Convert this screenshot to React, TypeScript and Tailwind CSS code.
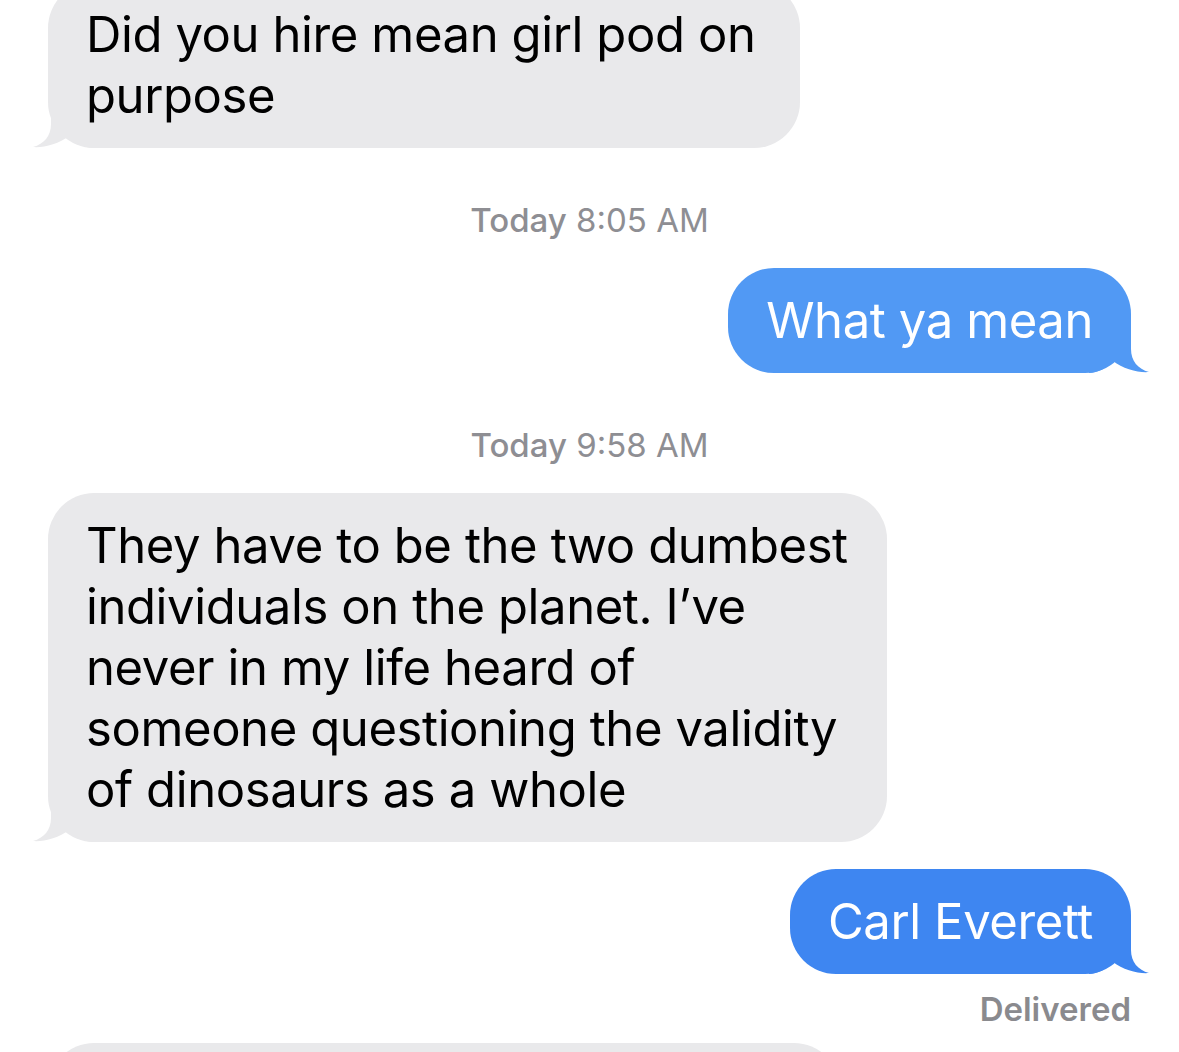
import React from "react";

const FONT = { fontFamily: '"Inter", "Liberation Sans", sans-serif' };

function TailRight({ color }: { color: string }) {
  return (
    <svg
      className="absolute bottom-0 right-[-18px]"
      width="60"
      height="46"
      viewBox="0 0 60 46"
    >
      <path
        d="M 0 0 L 42 0 L 42 22 C 42 34 49 42 60 45 C 50 46 34 42 24 34 C 17 41 9 46 0 46 Z"
        fill={color}
      />
    </svg>
  );
}

function TailLeft() {
  return (
    <svg
      className="absolute bottom-0 left-[-15px]"
      width="60"
      height="46"
      viewBox="0 0 60 46"
    >
      <path
        d="M 60 0 L 18 0 L 18 22 C 18 34 11 42 0 45 C 10 46 26 42 36 34 C 43 41 51 46 60 46 Z"
        fill="#e9e9eb"
      />
    </svg>
  );
}

function Received({ lines, width }: { lines: string[]; width: string }) {
  return (
    <div className="flex justify-start">
      <div className={`relative rounded-[46px] bg-[#e9e9eb] px-[38px] py-[22px] ${width}`}>
        <TailLeft />
        <div className="relative text-[49px] leading-[61px] tracking-[-0.4px] text-black">
          {lines.map((l, i) => (
            <div key={i} className="whitespace-nowrap">
              {l}
            </div>
          ))}
        </div>
      </div>
    </div>
  );
}

function Sent({ text, color }: { text: string; color: string }) {
  return (
    <div className="flex justify-end">
      <div
        className="relative rounded-[46px] px-[38px] py-[22px]"
        style={{ backgroundColor: color }}
      >
        <TailRight color={color} />
        <div className="relative whitespace-nowrap text-[49px] leading-[61px] tracking-[-0.4px] text-white">
          {text}
        </div>
      </div>
    </div>
  );
}

function Stamp({ time }: { time: string }) {
  return (
    <div className="text-center text-[33px] leading-[40px] text-[#8e8e93]">
      <span className="font-medium">Today</span> {time}
    </div>
  );
}

export default function App() {
  return (
    <div className="h-[1052px] w-[1179px] overflow-hidden bg-white" style={FONT}>
      <div className="-mt-[18px] flex flex-col px-[48px]">
        <Received lines={["Did you hire mean girl pod on", "purpose"]} width="w-[752px]" />
        <div className="mt-[52px]">
          <Stamp time="8:05 AM" />
        </div>
        <div className="mt-[28px]">
          <Sent text="What ya mean" color="#5199f4" />
        </div>
        <div className="mt-[52px]">
          <Stamp time="9:58 AM" />
        </div>
        <div className="mt-[28px]">
          <Received
            lines={[
              "They have to be the two dumbest",
              "individuals on the planet. I\u2019ve",
              "never in my life heard of",
              "someone questioning the validity",
              "of dinosaurs as a whole",
            ]}
            width="w-[839px]"
          />
        </div>
        <div className="mt-[27px]">
          <Sent text="Carl Everett" color="#3e86f1" />
        </div>
        <div className="mt-[15px] text-right text-[33px] font-semibold leading-[40px] text-[#8a8a8e]">
          Delivered
        </div>
        <div className="mt-[14px]">
          <div className="h-[200px] w-[792px] rounded-[46px] bg-[#e9e9eb]" />
        </div>
      </div>
    </div>
  );
}
